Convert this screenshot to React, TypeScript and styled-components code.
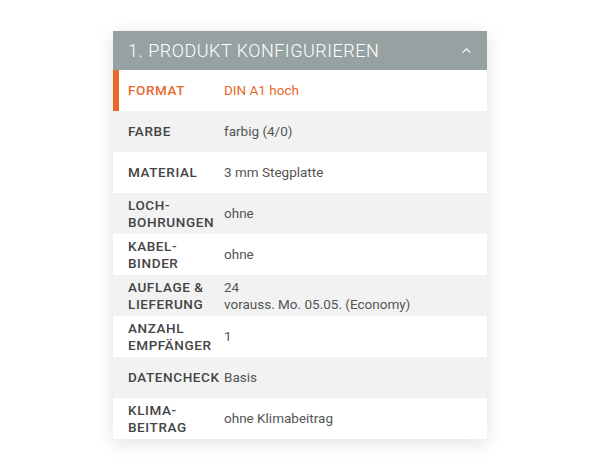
import React from 'react';
import styled, { createGlobalStyle } from 'styled-components';

const GlobalStyle = createGlobalStyle`
  html, body {
    margin: 0;
    padding: 0;
    background: #ffffff;
    font-family: Roboto, "Noto Sans", sans-serif;
  }
`;

type Spec = {
  label: string[];
  value: string[];
  active?: boolean;
};

const specs: Spec[] = [
  { label: ['FORMAT'], value: ['DIN A1 hoch'], active: true },
  { label: ['FARBE'], value: ['farbig (4/0)'] },
  { label: ['MATERIAL'], value: ['3 mm Stegplatte'] },
  { label: ['LOCH-', 'BOHRUNGEN'], value: ['ohne'] },
  { label: ['KABEL-', 'BINDER'], value: ['ohne'] },
  { label: ['AUFLAGE &', 'LIEFERUNG'], value: ['24', 'vorauss. Mo. 05.05. (Economy)'] },
  { label: ['ANZAHL', 'EMPFÄNGER'], value: ['1'] },
  { label: ['DATENCHECK'], value: ['Basis'] },
  { label: ['KLIMA-', 'BEITRAG'], value: ['ohne Klimabeitrag'] },
];

function App() {
  return (
    <>
      <GlobalStyle />
      <Page>
        <Panel>
          <Header>
            <HeaderTitle>1. Produkt konfigurieren</HeaderTitle>
            <Chevron viewBox="0 0 12 8" aria-hidden>
              <path d="M1.5 6.5 L6 2 L10.5 6.5" />
            </Chevron>
          </Header>
          {specs.map((spec, i) => (
            <Row key={spec.label.join('')} $striped={i % 2 === 1} $active={spec.active}>
              <Label $active={spec.active}>
                {spec.label.map((line) => (
                  <span key={line}>{line}</span>
                ))}
              </Label>
              <Value $active={spec.active}>
                {spec.value.map((line) => (
                  <span key={line}>{line}</span>
                ))}
              </Value>
            </Row>
          ))}
        </Panel>
      </Page>
    </>
  );
}

export default App;

const Page = styled.div`
  width: 600px;
  height: 470px;
  padding-top: 31px;
  box-sizing: border-box;
  display: flex;
  justify-content: center;
`;

const Panel = styled.div`
  width: 374px;
  align-self: flex-start;
  background: #ffffff;
  box-shadow: 0 4px 18px rgba(0, 0, 0, 0.12);
`;

const Header = styled.div`
  height: 39px;
  background: #95a2a1;
  display: flex;
  align-items: center;
  justify-content: space-between;
  padding: 0 15px;
`;

const HeaderTitle = styled.span`
  color: #ffffff;
  font-size: 18px;
  font-weight: 300;
  text-transform: uppercase;
  letter-spacing: 0.5px;
`;

const Chevron = styled.svg`
  width: 11px;
  height: 7px;
  fill: none;
  stroke: #ffffff;
  stroke-width: 1.3;
`;

const Row = styled.div<{ $striped: boolean; $active?: boolean }>`
  height: 41px;
  display: flex;
  align-items: center;
  background: ${({ $striped }) => ($striped ? '#f2f2f2' : '#ffffff')};
  box-shadow: ${({ $active }) => ($active ? 'inset 6px 0 0 #e8692e' : 'none')};
  padding-left: 15px;
  box-sizing: border-box;
`;

const Label = styled.div<{ $active?: boolean }>`
  width: 96px;
  flex-shrink: 0;
  display: flex;
  flex-direction: column;
  font-size: 13.5px;
  line-height: 17px;
  font-weight: 500;
  letter-spacing: 0.6px;
  color: ${({ $active }) => ($active ? '#e8692e' : '#444444')};
`;

const Value = styled.div<{ $active?: boolean }>`
  display: flex;
  flex-direction: column;
  font-size: 13.5px;
  line-height: 17px;
  letter-spacing: 0;
  color: ${({ $active }) => ($active ? '#e8692e' : '#555555')};
`;
